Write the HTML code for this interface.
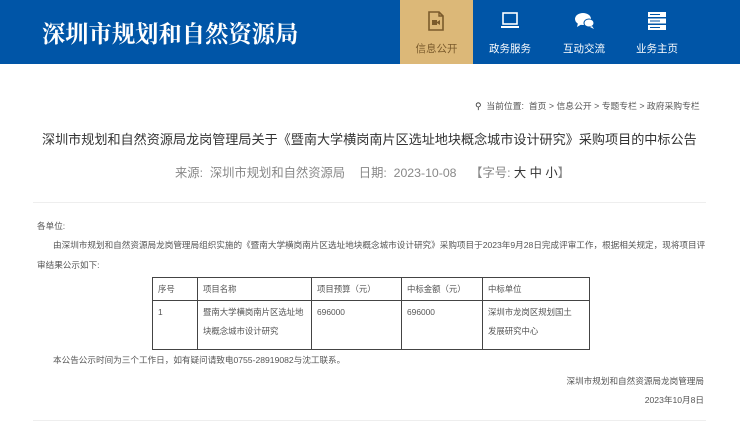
<!DOCTYPE html>
<html><head><meta charset="utf-8"><style>
*{margin:0;padding:0;box-sizing:border-box}
body{width:740px;height:430px;background:#fff;font-family:"Liberation Sans","Noto Sans CJK SC",sans-serif;position:relative;overflow:hidden;color:#333}
.hd{position:absolute;left:0;top:0;width:740px;height:64px;background:#0055a7}
.logo{position:absolute;left:42px;top:15px;font-family:"Liberation Serif","Noto Serif CJK SC",serif;font-weight:bold;font-size:23.3px;color:#fff}
.nav{position:absolute;top:0;height:64px;width:74px;text-align:center;color:#fff;font-size:10.5px}
.nav svg{position:absolute;left:27px;top:11px}
.nav span{position:absolute;left:0;right:0;top:41px}
.act{background:#dcb878;color:#7b5b2c}
.a{position:absolute;white-space:nowrap}
.bc{left:475px;top:99px;font-size:8.8px;color:#555}
.t{left:42px;top:129px;font-size:13.1px;color:#333}
.m{left:175px;top:163px;font-size:12.3px;color:#888}
.m b{font-weight:normal;color:#333}
.ln{position:absolute;left:33px;width:673px;height:1px;background:#eee}
.p{font-size:8.6px;color:#555}
table{position:absolute;left:152px;top:277px;border-collapse:collapse;font-size:8.4px;color:#555}
td{border:1px solid #444;vertical-align:top;padding:2px 5px 0 5px;line-height:19px}
</style></head><body>
<div class="hd">
<div class="logo">深圳市规划和自然资源局</div>
<div class="nav act" style="left:400px;width:73px"><svg width="18" height="20" viewBox="0 0 18 20"><path d="M2 1h10l4 4v14H2z" fill="none" stroke="#7b5b2c" stroke-width="1.6"/><path d="M12 1v4h4" fill="none" stroke="#7b5b2c" stroke-width="1.4"/><rect x="5" y="9" width="5" height="5" fill="#7b5b2c"/><path d="M10 11l3-2v5l-3-2z" fill="#7b5b2c"/></svg><span>信息公开</span></div>
<div class="nav" style="left:473px"><svg width="20" height="20" viewBox="0 0 20 20"><rect x="3" y="2" width="14" height="11" fill="none" stroke="#fff" stroke-width="1.6"/><rect x="1" y="15" width="18" height="2" fill="#fff"/></svg><span>政务服务</span></div>
<div class="nav" style="left:547px"><svg width="22" height="20" viewBox="0 0 22 20"><ellipse cx="9" cy="8" rx="8" ry="6" fill="#fff"/><path d="M4 12l-1 4 5-3z" fill="#fff"/><ellipse cx="15" cy="12" rx="5" ry="4" fill="#fff" stroke="#0055a7" stroke-width="1"/><path d="M18 15l2 3-4-2z" fill="#fff"/></svg><span>互动交流</span></div>
<div class="nav" style="left:620px"><svg width="20" height="20" viewBox="0 0 20 20"><rect x="1" y="1" width="18" height="5" fill="#fff"/><rect x="1" y="7.5" width="18" height="5" fill="#fff"/><rect x="1" y="14" width="18" height="5" fill="#fff"/><rect x="3" y="3" width="10" height="1" fill="#0055a7"/><rect x="3" y="9.5" width="10" height="1" fill="#0055a7"/><rect x="3" y="16" width="10" height="1" fill="#0055a7"/></svg><span>业务主页</span></div>
</div>
<div class="a bc"><span style="color:#333">⚲</span>&nbsp; 当前位置:&nbsp; 首页 &gt; 信息公开 &gt; 专题专栏 &gt; 政府采购专栏</div>
<div class="a t">深圳市规划和自然资源局龙岗管理局关于《暨南大学横岗南片区选址地块概念城市设计研究》采购项目的中标公告</div>
<div class="a m">来源:&nbsp; 深圳市规划和自然资源局&nbsp;&nbsp;&nbsp; 日期:&nbsp; 2023-10-08&nbsp;&nbsp;&nbsp; 【字号: <b>大 中 小</b>】</div>
<div class="ln" style="top:202px"></div>
<div class="a p" style="left:37px;top:220px">各单位:</div>
<div class="a p" style="left:53px;top:239px">由深圳市规划和自然资源局龙岗管理局组织实施的《暨南大学横岗南片区选址地块概念城市设计研究》采购项目于2023年9月28日完成评审工作，根据相关规定，现将项目评</div>
<div class="a p" style="left:37px;top:259px">审结果公示如下:</div>
<table>
<tr style="height:23px"><td style="width:45px">序号</td><td style="width:114px">项目名称</td><td style="width:90px">项目预算（元）</td><td style="width:81px">中标金额（元）</td><td style="width:107px">中标单位</td></tr>
<tr style="height:49px"><td>1</td><td>暨南大学横岗南片区选址地<br>块概念城市设计研究</td><td>696000</td><td>696000</td><td>深圳市龙岗区规划国土<br>发展研究中心</td></tr>
</table>
<div class="a p" style="left:53px;top:354px">本公告公示时间为三个工作日，如有疑问请致电0755-28919082与沈工联系。</div>
<div class="a p" style="right:36px;top:375px">深圳市规划和自然资源局龙岗管理局</div>
<div class="a p" style="right:36px;top:394px">2023年10月8日</div>
<div class="ln" style="top:420px"></div>
</body></html>
